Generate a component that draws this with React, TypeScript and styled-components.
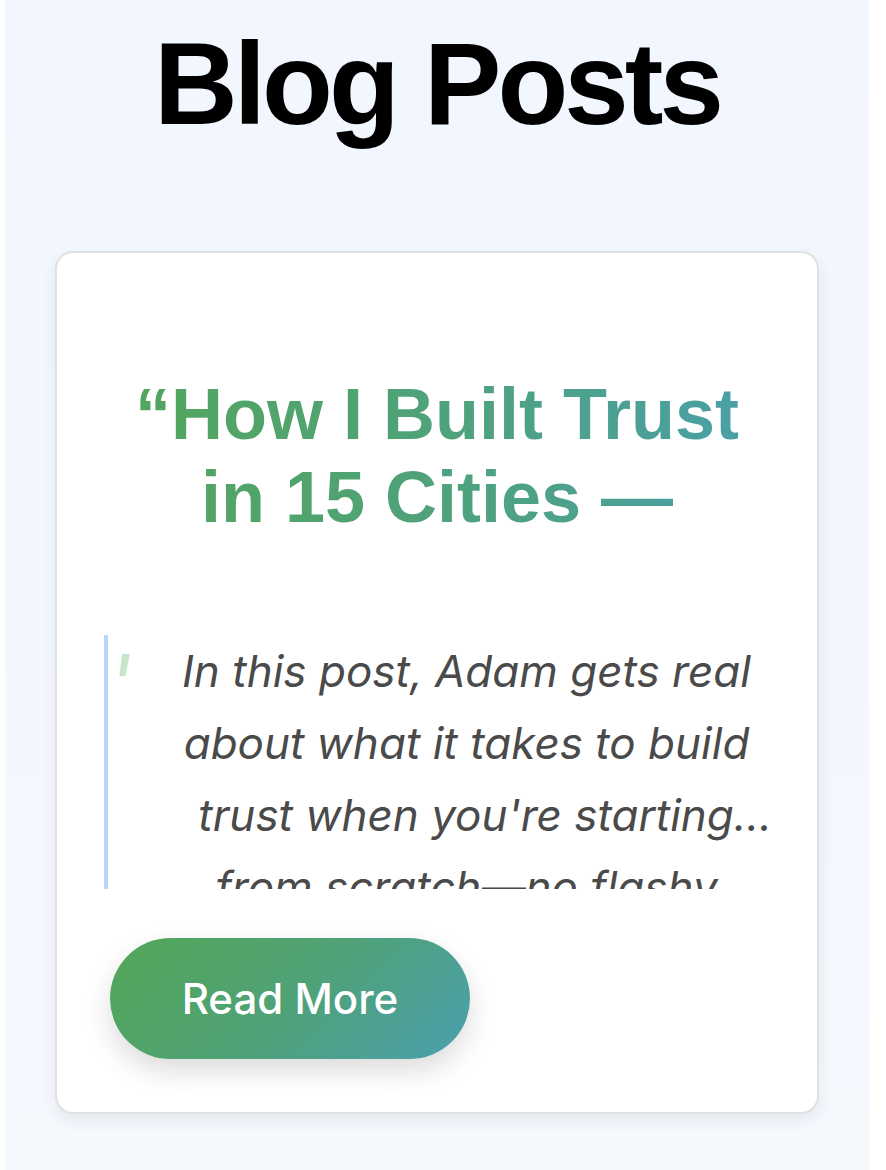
import React from 'react';
import styled, {createGlobalStyle} from 'styled-components';

const GlobalStyle=createGlobalStyle`
    html, body {
        margin: 0;
        padding: 0;
        background: #ffffff;
    }
`;

const Page=styled.div`
    margin-left: 5px;
    width: 864px;
    min-height: 1170px;
    box-sizing: border-box;
    padding: 19px 50px 40px 50px;
    background: linear-gradient(180deg, #f2f6fe 0%, #f5f8fd 100%);
    display: flex;
    flex-direction: column;
    align-items: stretch;
`;

const Heading=styled.h1`
    margin: 0;
    text-align: center;
    font-family: "Liberation Sans", Arial, sans-serif;
    font-weight: 700;
    font-size: 116px;
    line-height: 131px;
    letter-spacing: -4px;
    color: #000000;
`;

const Card=styled.article`
    margin-top: 101px;
    background: #ffffff;
    border: 2px solid #e1e1e3;
    border-radius: 18px;
    box-shadow: 0 6px 16px rgba(40, 50, 70, 0.08);
    padding: 120px 44px 53px 47px;
    display: flex;
    flex-direction: column;
    align-items: flex-start;
`;

const PostTitle=styled.h2`
    align-self: stretch;
    margin: 0 3px 96px 0;
    text-align: center;
    font-family: "Liberation Sans", Arial, sans-serif;
    font-weight: 700;
    font-size: 72px;
    line-height: 83px;
    background: linear-gradient(90deg, #53a65a 0%, #4fa27a 50%, #4a9fa9 100%);
    -webkit-background-clip: text;
    background-clip: text;
    color: transparent;
`;

const Excerpt=styled.blockquote`
    position: relative;
    align-self: stretch;
    margin: 0;
    height: 254px;
    overflow: hidden;
    border-left: 4px solid #b8d7fb;
    padding-left: 52px;
`;

const QuoteMark=styled.span`
    position: absolute;
    left: 0px;
    top: 8px;
    font-family: Inter, "Noto Sans", sans-serif;
    font-style: italic;
    font-size: 80px;
    line-height: 1;
    color: #c7e5c9;
`;

const ExcerptText=styled.p`
    margin: 0;
    text-align: center;
    font-family: Inter, "Noto Sans", sans-serif;
    font-style: italic;
    font-size: 44px;
    line-height: 72px;
    color: #4a4a4a;
`;

const ReadMore=styled.button`
    margin: 49px 0 0 6px;
    width: 360px;
    height: 121px;
    border: none;
    border-radius: 61px;
    background: linear-gradient(135deg, #53a657 0%, #4fa276 50%, #4a9fae 100%);
    color: #ffffff;
    font-family: Inter, "Noto Sans", sans-serif;
    font-weight: 500;
    font-size: 42px;
    box-shadow: 0 12px 28px rgba(0, 0, 0, 0.14);
    cursor: pointer;
`;

export default function App(){
    return (
        <>
            <GlobalStyle/>
            <Page>
                <Heading>Blog Posts</Heading>
                <Card>
                    <PostTitle>“How I Built Trust in 15 Cities —</PostTitle>
                    <Excerpt>
                        <QuoteMark>'</QuoteMark>
                        <ExcerptText>
                            In this post, Adam gets real about what it takes to build {'\u00a0\u00a0\u00a0'}trust when you're starting... from scratch—no flashy marketing, no big budget, just showing up and keeping promises.
                        </ExcerptText>
                    </Excerpt>
                    <ReadMore>Read More</ReadMore>
                </Card>
            </Page>
        </>
    );
}
